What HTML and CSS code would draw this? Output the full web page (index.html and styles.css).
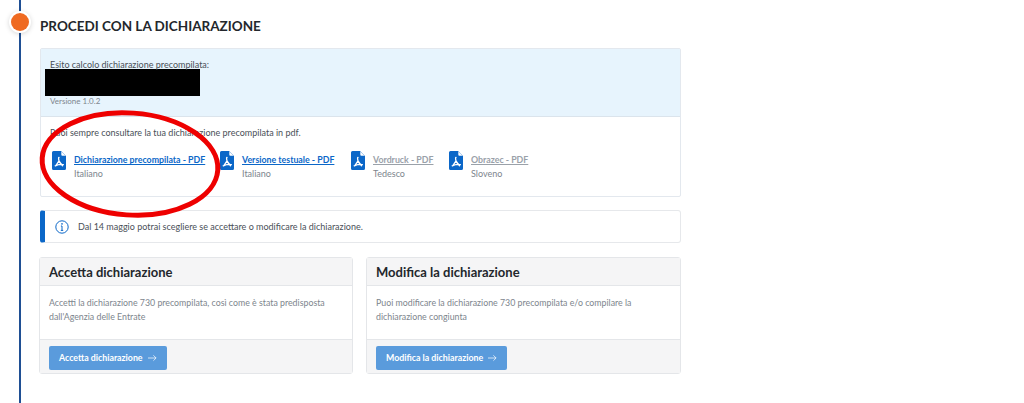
FILE: index.html
```html
<!DOCTYPE html>
<html lang="it">
<head>
<meta charset="utf-8">
<title>Procedi con la dichiarazione</title>
<link rel="stylesheet" href="styles.css">
</head>
<body>
<main class="timeline">
  <span class="dot"></span>
  <h1 class="title">PROCEDI CON LA DICHIARAZIONE</h1>
  <section class="result">
    <div class="result-head">
      <p class="result-label">Esito calcolo dichiarazione precompilata:</p>
      <div class="redacted"></div>
      <p class="version">Versione 1.0.2</p>
    </div>
    <div class="result-body">
      <p class="intro">Puoi sempre consultare la tua dichiarazione precompilata in pdf.</p>
      <div class="docs">
        <div class="doc doc-a">
          <svg class="pdf" viewBox="0 0 14 19"><path class="pdf-bg" d="M1.500 0H9l5 5v12.500a1.500 1.500 0 0 1-1.500 1.500h-11A1.500 1.500 0 0 1 0 17.500V1.500A1.500 1.500 0 0 1 1.500 0z"/><path class="pdf-fold" d="M9.300 0.500v3.200a1 1 0 0 0 1 1h3.200z"/><path class="pdf-mark" d="M7 6.500c-.5 0-.6.900 0 3.300L3.700 14.800M7 9.800l3.500 5M3.200 14.900l3.800-1.400 4.400.2"/></svg>
          <div><a class="doc-link" href="#">Dichiarazione precompilata - PDF</a><span class="doc-lang">Italiano</span></div>
        </div>
        <div class="doc doc-b">
          <svg class="pdf" viewBox="0 0 14 19"><path class="pdf-bg" d="M1.500 0H9l5 5v12.500a1.500 1.500 0 0 1-1.500 1.500h-11A1.500 1.500 0 0 1 0 17.500V1.500A1.500 1.500 0 0 1 1.500 0z"/><path class="pdf-fold" d="M9.300 0.500v3.200a1 1 0 0 0 1 1h3.200z"/><path class="pdf-mark" d="M7 6.500c-.5 0-.6.900 0 3.300L3.700 14.800M7 9.800l3.500 5M3.200 14.900l3.800-1.400 4.400.2"/></svg>
          <div><a class="doc-link" href="#">Versione testuale - PDF</a><span class="doc-lang">Italiano</span></div>
        </div>
        <div class="doc doc-c">
          <svg class="pdf" viewBox="0 0 14 19"><path class="pdf-bg" d="M1.500 0H9l5 5v12.500a1.500 1.500 0 0 1-1.500 1.500h-11A1.500 1.500 0 0 1 0 17.500V1.500A1.500 1.500 0 0 1 1.500 0z"/><path class="pdf-fold" d="M9.300 0.500v3.200a1 1 0 0 0 1 1h3.200z"/><path class="pdf-mark" d="M7 6.500c-.5 0-.6.900 0 3.300L3.700 14.800M7 9.800l3.500 5M3.200 14.900l3.800-1.400 4.400.2"/></svg>
          <div><a class="doc-link muted" href="#">Vordruck - PDF</a><span class="doc-lang">Tedesco</span></div>
        </div>
        <div class="doc">
          <svg class="pdf" viewBox="0 0 14 19"><path class="pdf-bg" d="M1.500 0H9l5 5v12.500a1.500 1.500 0 0 1-1.500 1.500h-11A1.500 1.500 0 0 1 0 17.500V1.500A1.500 1.500 0 0 1 1.500 0z"/><path class="pdf-fold" d="M9.300 0.500v3.200a1 1 0 0 0 1 1h3.200z"/><path class="pdf-mark" d="M7 6.500c-.5 0-.6.900 0 3.300L3.700 14.800M7 9.800l3.500 5M3.200 14.900l3.800-1.400 4.400.2"/></svg>
          <div><a class="doc-link muted" href="#">Obrazec - PDF</a><span class="doc-lang">Sloveno</span></div>
        </div>
      </div>
    </div>
  </section>
  <div class="notice">
    <svg class="info" viewBox="0 0 14 14"><circle cx="7" cy="7" r="6.200"/><path d="M7 6v4.200M5.800 10.400h2.400M5.900 6h1.100"/><circle class="info-dot" cx="7" cy="3.900" r=".8"/></svg>
    <span>Dal 14 maggio potrai scegliere se accettare o modificare la dichiarazione.</span>
  </div>
  <div class="cards">
    <article class="card">
      <h2 class="card-title">Accetta dichiarazione</h2>
      <p class="card-text">Accetti la dichiarazione 730 precompilata, così come è stata predisposta dall'Agenzia delle Entrate</p>
      <div class="card-foot"><a class="btn" href="#">Accetta dichiarazione<svg class="arrow" viewBox="0 0 10 8"><path d="M0 4h9M6 1l3 3-3 3"/></svg></a></div>
    </article>
    <article class="card">
      <h2 class="card-title">Modifica la dichiarazione</h2>
      <p class="card-text">Puoi modificare la dichiarazione 730 precompilata e/o compilare la dichiarazione congiunta</p>
      <div class="card-foot"><a class="btn" href="#">Modifica la dichiarazione<svg class="arrow" viewBox="0 0 10 8"><path d="M0 4h9M6 1l3 3-3 3"/></svg></a></div>
    </article>
  </div>
  <svg class="circle-mark" viewBox="0 0 190 116"><ellipse cx="95" cy="58" rx="88" ry="51" transform="rotate(4 95 58)"/></svg>
</main>
</body>
</html>
```
FILE: styles.css
```css
* { box-sizing: border-box; }
html, body { margin: 0; padding: 0; height: 100%; overflow: hidden; background: #fff; }
body { font-family: "Lato", "Noto Sans", sans-serif; color: #3b4149; }
p, h1, h2 { margin: 0; }

.timeline { position: relative; height: 403px; width: 662px; margin-left: 19px; border-left: 2px solid #1f4f94; padding: 17px 0 0 19px; }
.dot { position: absolute; left: -10px; top: 13px; width: 18px; height: 18px; border-radius: 50%; background: #ef6a21; box-shadow: 0 0 0 2px #fff, 0 1px 5px 2px rgba(0,0,0,.16); }
.title { font-size: 13.500px; line-height: 18px; font-weight: 700; color: #23272c; }

.result { margin-top: 13px; border: 1px solid #e3e8ee; border-radius: 2px; }
.result-head { height: 68px; padding: 10px 9px 0; background: #e7f4fd; border-bottom: 1px solid #dbe4ec; }
.result-label { font-size: 9px; line-height: 12px; color: #4a5058; }
.redacted { width: 155px; height: 27px; margin: -2px 0 0 -5px; background: #000; }
.version { font-size: 8px; line-height: 11px; color: #7d858d; }
.result-body { height: 79px; padding: 10px 9px 0; }
.intro { font-size: 9px; line-height: 12px; color: #4a5058; }
.docs { display: flex; margin-top: 14px; }
.doc { display: flex; gap: 8px; }
.doc-a { width: 170px; padding-left: 2px; }
.doc-b { width: 131px; }
.doc-c { width: 98px; }
.pdf { width: 14px; height: 19px; flex: none; margin-top: -2px; }
.pdf-bg { fill: #0b67c8; }
.pdf-fold { fill: #fff; }
.pdf-mark { fill: none; stroke: #fff; stroke-width: 1.300; stroke-linecap: round; stroke-linejoin: round; }
.doc-link { display: block; font-size: 8.800px; line-height: 13px; font-weight: 700; color: #0b67c8; text-decoration: underline; white-space: nowrap; }
.doc-link.muted { color: #9aa1a9; }
.doc-lang { display: block; margin-top: 1px; font-size: 9px; line-height: 13px; color: #7d858d; }

.notice { display: flex; align-items: center; gap: 9px; height: 33px; margin-top: 13px; padding-left: 10px; border: 1px solid #e6e8eb; border-left: 5px solid #0b67c8; border-radius: 3px; font-size: 9px; color: #4a5058; }
.info { width: 14px; height: 14px; flex: none; fill: none; stroke: #0b67c8; stroke-width: 1; }
.info-dot { fill: #0b67c8; stroke: none; }

.cards { display: grid; grid-template-columns: 314px 315px; gap: 13px; margin-top: 14px; margin-left: -1px; }
.card { display: flex; flex-direction: column; height: 117px; border: 1px solid #e4e6e9; border-radius: 3px; }
.card-title { height: 28px; padding: 0 9px; background: #f5f5f6; border-bottom: 1px solid #e4e6e9; font-size: 13px; line-height: 28px; font-weight: 700; color: #23272c; }
.card-text { flex: 1; padding: 10px 9px 0; font-size: 8.800px; line-height: 13.500px; color: #7d858d; }
.card-foot { height: 34px; padding: 5px 9px 0; background: #f5f5f6; border-top: 1px solid #e4e6e9; }
.btn { display: inline-flex; align-items: center; gap: 5px; height: 24px; padding: 0 10px; background: #5a9bdc; border-radius: 2px; font-size: 8.800px; font-weight: 700; color: #fff; text-decoration: none; white-space: nowrap; }
.arrow { width: 9px; height: 8px; fill: none; stroke: #fff; stroke-width: .8; }

.circle-mark { position: absolute; left: 14px; top: 106px; width: 190px; height: 116px; fill: none; stroke: #ee0000; stroke-width: 5; overflow: visible; }
```
